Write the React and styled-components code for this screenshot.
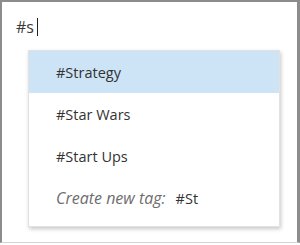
import React from 'react'
import styled, { createGlobalStyle } from 'styled-components'

const GlobalStyle = createGlobalStyle`
  html, body {
    margin: 0;
    padding: 0;
    background: #ffffff;
  }
  body {
    font-family: 'Open Sans', 'Noto Sans', 'Liberation Sans', sans-serif;
  }
`

const Frame = styled.div`
  box-sizing: border-box;
  width: 300px;
  height: 243px;
  border-top: 2px solid #8c8c8c;
  border-left: 2px solid #8c8c8c;
  border-right: 3px solid #8c8c8c;
  border-bottom: 1px solid #d4d4d4;
  background: #ffffff;
  padding: 13px 0 0 14px;
`

const Input = styled.div`
  display: flex;
  align-items: center;
  height: 24px;
  font-size: 16px;
  color: #3a3a3a;
`

const Caret = styled.span`
  display: inline-block;
  width: 1px;
  height: 18px;
  margin-left: 3px;
  background: #222;
`

const Menu = styled.ul`
  list-style: none;
  box-sizing: border-box;
  width: 252px;
  margin: 11px 0 0 12px;
  padding: 0 0 7px;
  background: #ffffff;
  border: 1px solid #e2e2e2;
  box-shadow: 1px 2px 4px rgba(0, 0, 0, 0.22);
`

const Item = styled.li`
  display: flex;
  align-items: center;
  height: 42px;
  padding-left: 27px;
  font-size: 14.5px;
  color: #333333;
  background: ${p => (p.$active ? '#cde4f6' : 'transparent')};
`

const Hint = styled.em`
  font-size: 16px;
  color: #6e6e6e;
  margin-right: 10px;
`

export default function App() {
  return (
    <>
      <GlobalStyle />
      <Frame>
        <Input>
          #s<Caret />
        </Input>
        <Menu>
          <Item $active>#Strategy</Item>
          <Item>#Star Wars</Item>
          <Item>#Start Ups</Item>
          <Item>
            <Hint>Create new tag:</Hint>#St
          </Item>
        </Menu>
      </Frame>
    </>
  )
}
